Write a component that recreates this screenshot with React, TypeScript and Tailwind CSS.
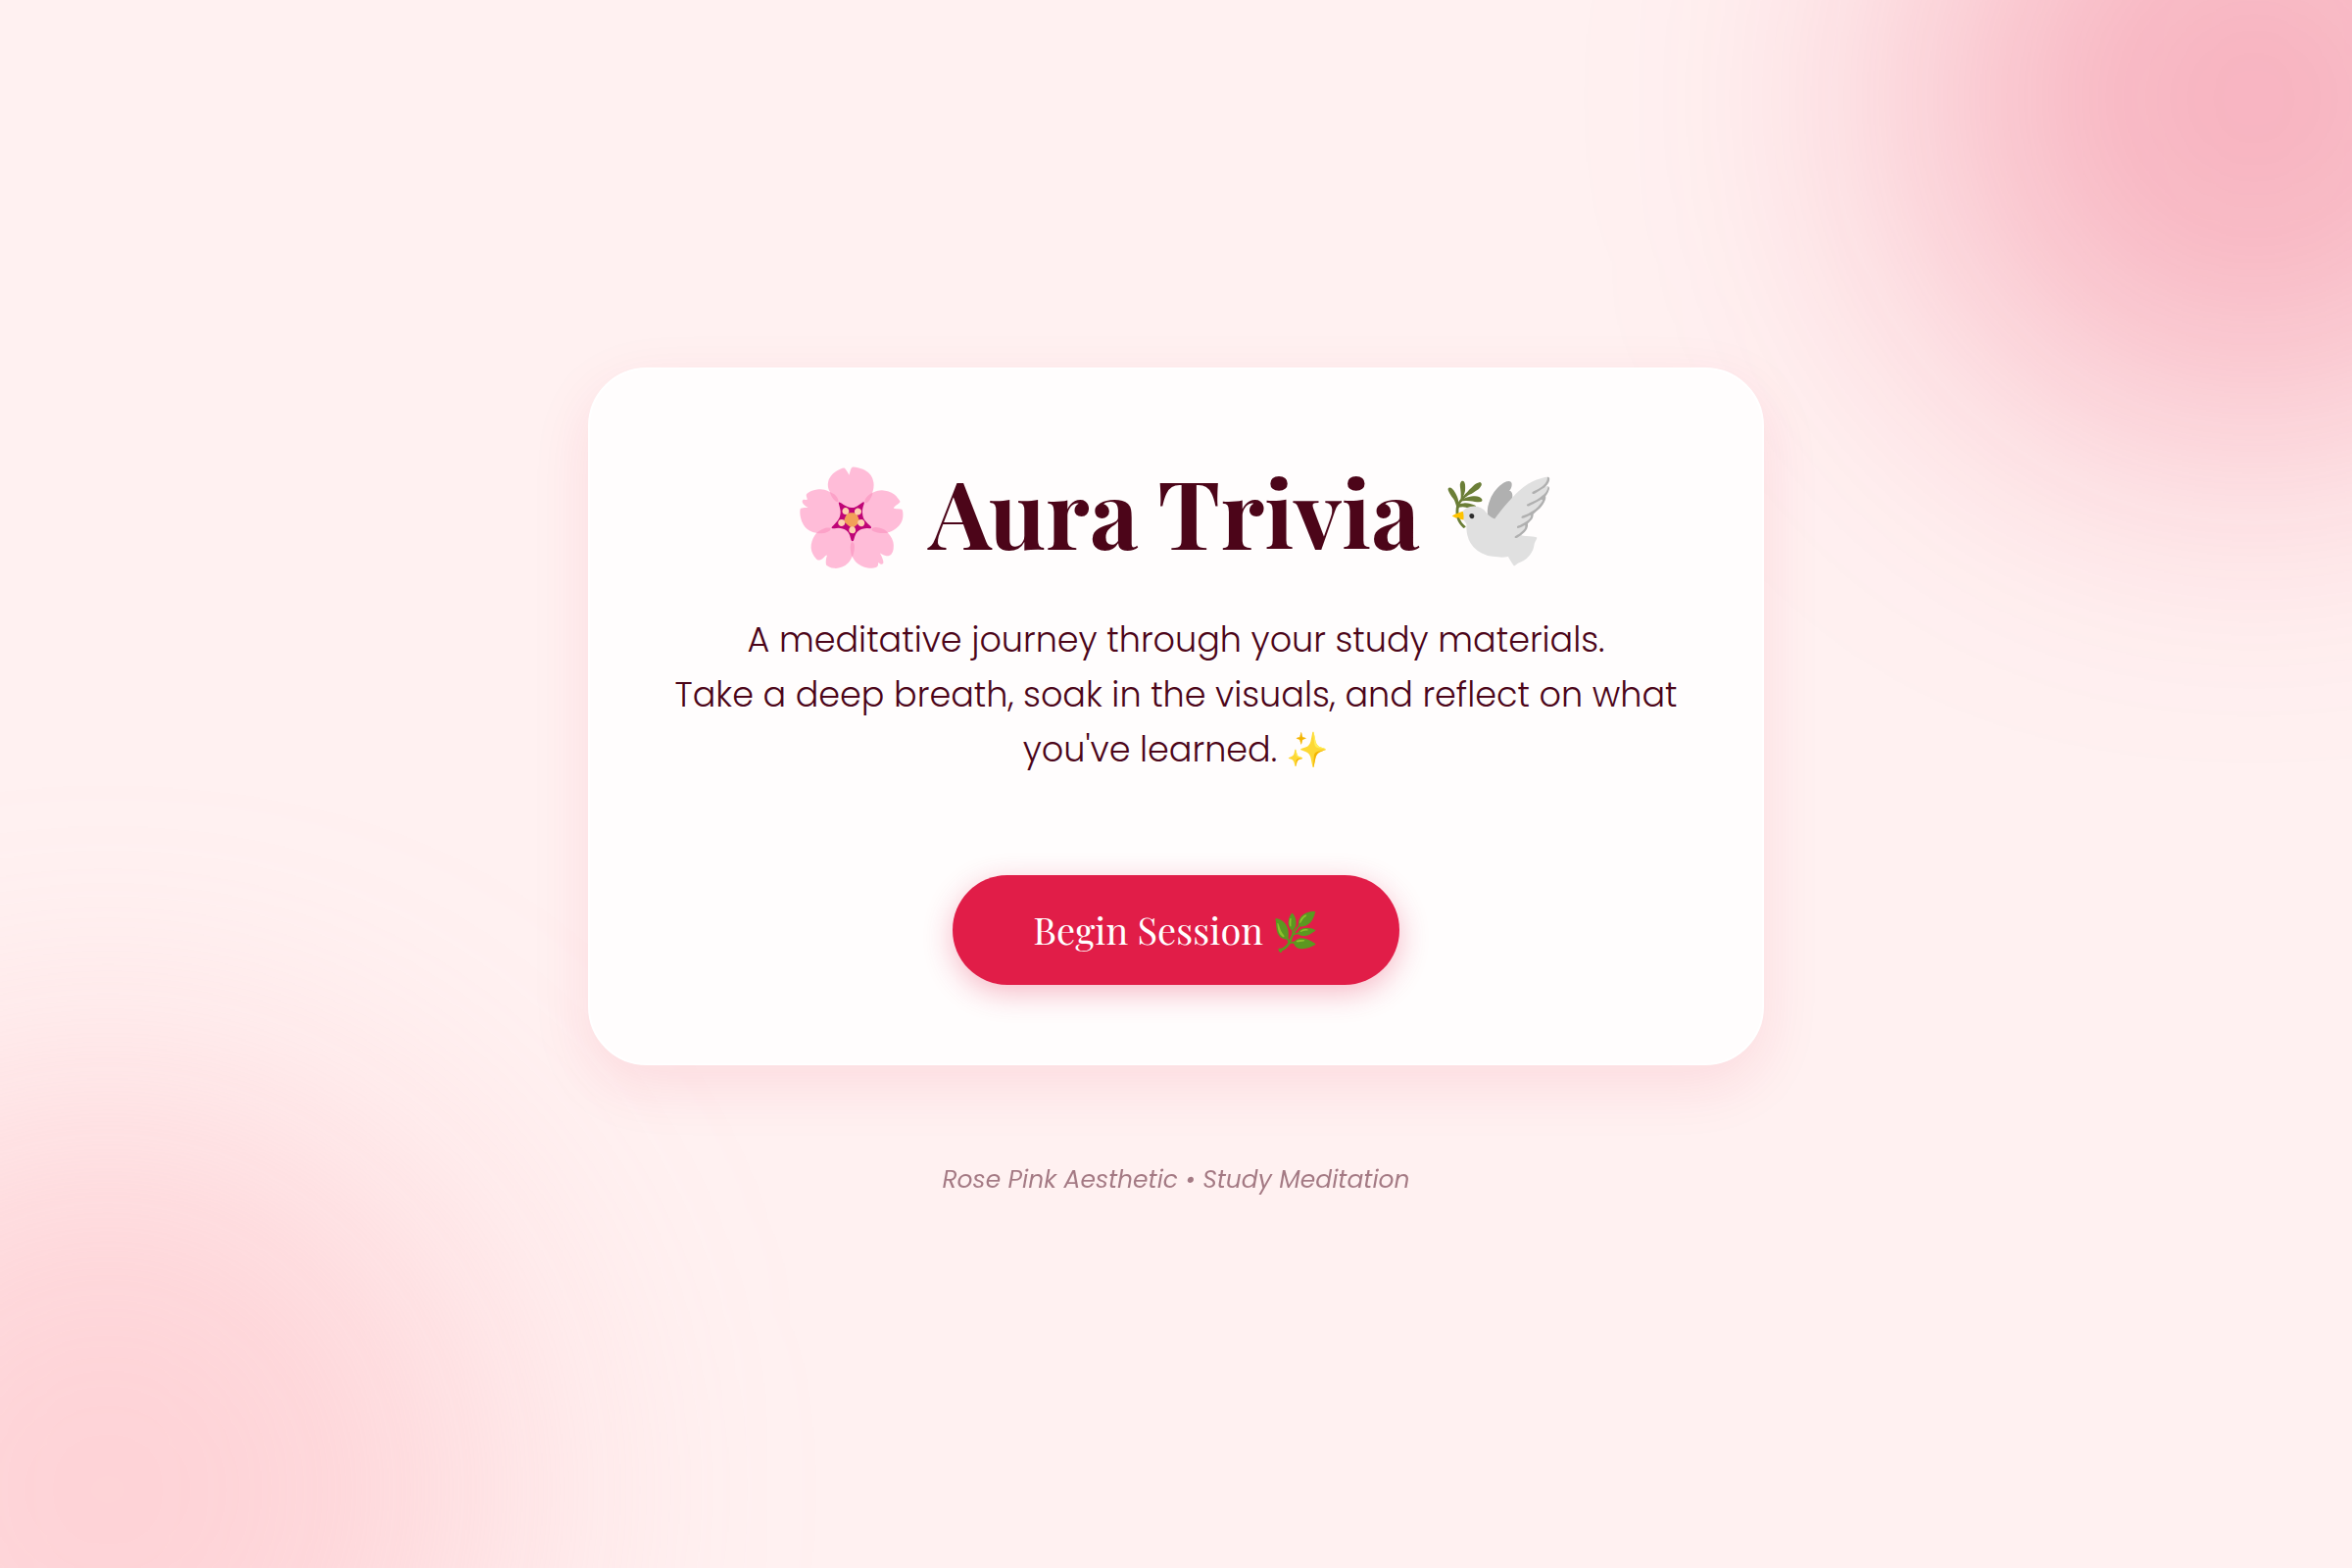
const App = () => {
  return (
    <main className="relative flex min-h-screen flex-col items-center justify-center overflow-hidden bg-[#fff1f1] font-['Poppins','Inter','Noto_Color_Emoji',sans-serif] text-[#4c0519]">
      {/* soft glows in the corners */}
      <div
        aria-hidden="true"
        className="absolute -top-[250px] -right-[250px] h-[700px] w-[700px] rounded-full bg-[#e6254f]/31 blur-[160px]"
      />
      <div
        aria-hidden="true"
        className="absolute -bottom-[320px] -left-[290px] h-[800px] w-[800px] rounded-full bg-[#fda4af]/39 blur-[150px]"
      />

      <section className="relative flex w-1/2 flex-col items-center rounded-[60px] border-2 border-white bg-[#fffdfd] p-20 text-center shadow-[0_20px_60px_rgba(225,29,72,0.1)]">
        <h1 className="font-['Playfair_Display','Liberation_Serif','Noto_Color_Emoji',serif] text-[96px] leading-[128px] font-bold">
          🌸 Aura Trivia 🕊️
        </h1>
        <p className="mt-10 text-[35px] leading-[56px] font-light">
          A meditative journey through your study materials.
          <br />
          Take a deep breath, soak in the visuals, and reflect on what you've learned. ✨
        </p>
        <button
          type="button"
          className="mt-[100px] rounded-full bg-[#e11d48] px-[82px] py-[30px] font-['Playfair_Display','Liberation_Serif','Noto_Color_Emoji',serif] text-[38px] leading-[52px] text-white shadow-[0_8px_30px_rgba(225,29,72,0.3)]"
        >
          Begin Session 🌿
        </button>
      </section>

      <footer className="relative mt-24 text-[25px] leading-[42px] italic opacity-50">
        Rose Pink Aesthetic • Study Meditation
      </footer>
    </main>
  );
};

export default App;
